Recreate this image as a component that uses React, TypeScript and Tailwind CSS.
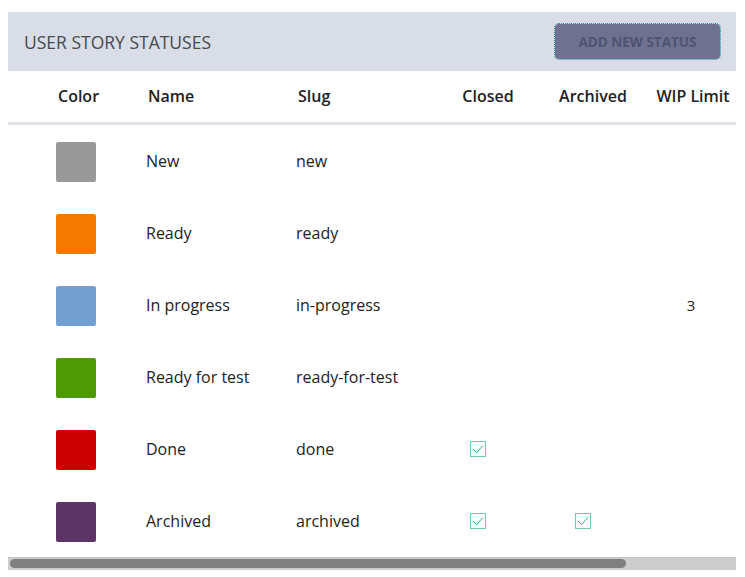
const statuses = [
  { name: "New", slug: "new", color: "#999999", closed: false, archived: false, wip: "" },
  { name: "Ready", slug: "ready", color: "#f57900", closed: false, archived: false, wip: "" },
  { name: "In progress", slug: "in-progress", color: "#729fcf", closed: false, archived: false, wip: "3" },
  { name: "Ready for test", slug: "ready-for-test", color: "#4e9a06", closed: false, archived: false, wip: "" },
  { name: "Done", slug: "done", color: "#cc0000", closed: true, archived: false, wip: "" },
  { name: "Archived", slug: "archived", color: "#5c3566", closed: true, archived: true, wip: "" },
];

function Check() {
  return (
    <span className="flex h-4 w-4 items-center justify-center border border-[#6fcbb1] bg-white">
      <svg width="12" height="10" viewBox="0 0 12 10" fill="none">
        <path d="M1 5 L4.5 8.5 L11 1.5" stroke="#2aa488" strokeWidth="1" />
      </svg>
    </span>
  );
}

export default function App() {
  return (
    <div className="min-h-screen bg-white pt-3 pl-2 font-['Open_Sans',sans-serif] text-[#222]">
      <div className="w-[728px] overflow-hidden">
        <div className="flex h-[59px] items-center justify-between bg-[#d8dde8] pl-4 pr-4">
          <h1 className="pt-[2px] text-[17.5px] uppercase text-[#4a4a4a]">User Story Statuses</h1>
          <button className="h-[35px] w-[165px] rounded-[4px] bg-[#6f7190] pt-[1px] text-[13.5px] font-bold uppercase text-[#4e5570] outline-1 outline-dotted outline-[#1a8d9a]">
            Add new status
          </button>
        </div>

        <div className="grid h-[54px] grid-cols-[130px_150px_150px_100px_110px_90px] items-center border-b-[3px] border-[#e3e4e9] pb-[2px] text-[16px] font-semibold">
          <div className="pl-[50px]">Color</div>
          <div className="pl-[10px]">Name</div>
          <div className="pl-[10px]">Slug</div>
          <div className="text-center">Closed</div>
          <div className="text-center">Archived</div>
          <div className="whitespace-nowrap text-center">WIP Limit</div>
        </div>

        {statuses.map((s) => (
          <div
            key={s.slug}
            className="grid h-[72px] grid-cols-[130px_150px_150px_100px_110px_90px] items-center text-[16px]"
          >
            <div className="pl-[48px] pt-[2px]">
              <div className="h-10 w-10 rounded-[2px]" style={{ backgroundColor: s.color }} />
            </div>
            <div className="pl-2">{s.name}</div>
            <div className="pl-2">{s.slug}</div>
            <div className="flex justify-center pr-5">{s.closed && <Check />}</div>
            <div className="flex justify-center pr-5">{s.archived && <Check />}</div>
            <div className="pr-1 text-center text-[15px]">{s.wip}</div>
          </div>
        ))}

        <div className="h-[13px] border-t border-[#c9c3bd] bg-[#cdcdcd] pl-[2px] pt-[1px]">
          <div className="h-[9px] w-[616px] rounded-full bg-[#808080]" />
        </div>
      </div>
    </div>
  );
}
